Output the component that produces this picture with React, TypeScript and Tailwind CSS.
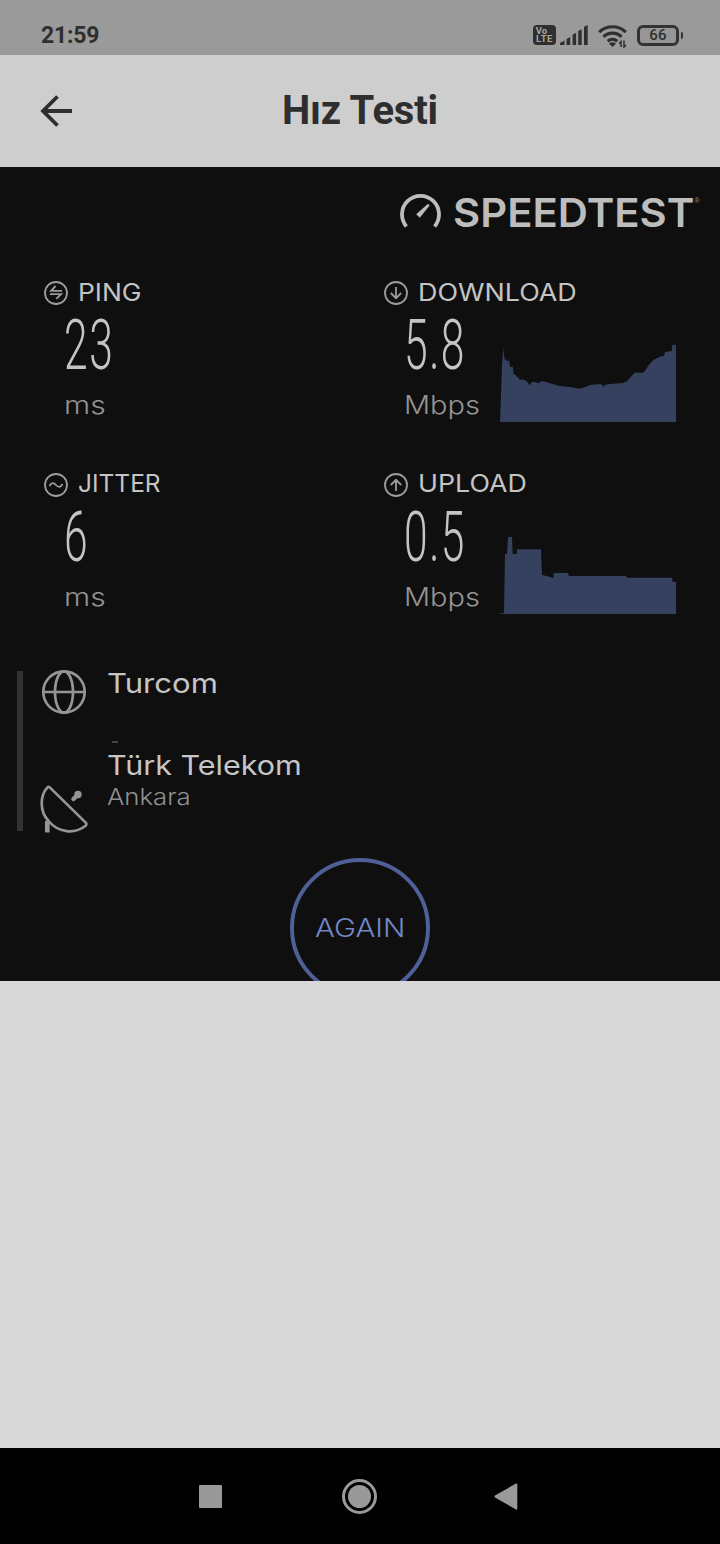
import type { ReactNode } from "react";

const DOWNLOAD =
  "0,77 2,21.7 3.3,2.3 4,10 5,15.7 6.7,14.3 7.7,16.7 9.3,15 10,22.3 12.7,21.3 13.7,29.3 15.7,30 17,32.3 18.3,32.3 20,35 22.7,34.3 26.7,36.3 29.7,40.3 31.7,37 35,37 36.7,37.7 40,37.7 41.3,36 46.7,37.3 58.3,40.7 71.7,42.3 79,43.7 83.3,42.7 90,40 96.7,39.3 101.7,39.3 103.3,42 104.7,40 110,39 123.3,38 127.3,36 130,32.7 134.7,27.7 141.7,27.7 144.3,26.7 148.3,20.7 153.3,15 161,11.3 164,11 165,7 171.7,6 172.3,0 176,0 176,77";
const UPLOAD =
  "0,77 0,76.3 4,76.3 5,17.3 7,16.7 8,0 12,0 12.7,17 16.7,17 17,12.3 41,12.3 42,38 46.7,39 53.3,41 53.7,36 67.7,36 69,39 126,39 127,40.7 172,40.7 172.7,45 176,45 176,77";

function Chart({ points }: { points: string }) {
  return (
    <svg width="176" height="77" viewBox="0 0 176 77" className="block">
      <polygon points={points} fill="#36405f" />
    </svg>
  );
}

function CircleIcon({ children }: { children: ReactNode }) {
  return (
    <svg width="24" height="24" viewBox="0 0 24 24" fill="none" stroke="#9c9c9c" strokeWidth="1.8" className="block shrink-0">
      <circle cx="12" cy="12" r="11" />
      {children}
    </svg>
  );
}

interface MetricProps {
  icon: ReactNode;
  label: string;
  labelClass: string;
  value: string;
  unit: string;
  unitClass: string;
  points?: string;
}

function Metric({ icon, label, labelClass, value, unit, unitClass, points }: MetricProps) {
  return (
    <section className="h-[144px] w-[340px]">
      <div className="flex h-6 items-center">
        <CircleIcon>{icon}</CircleIcon>
        <h2 className={`ml-[10px] origin-left whitespace-nowrap text-[24px] leading-6 text-[#c4c4c4] ${labelClass}`}>{label}</h2>
      </div>
      <div className="flex">
        <div className="ml-5 w-24">
          <p className="w-max origin-left scale-x-[0.6] whitespace-nowrap font-[Roboto] text-[71px] font-light leading-[80px] tracking-[2.5px] text-[#c4c4c4]">{value}</p>
          <p className={`w-max origin-left text-[25px] font-light leading-10 text-[#949494] ${unitClass}`}>{unit}</p>
        </div>
        {points && (
          <div className="pt-10">
            <Chart points={points} />
          </div>
        )}
      </div>
    </section>
  );
}

function StatusBar() {
  return (
    <div className="flex h-[55px] items-center bg-[#9a9a9a] pl-[41px] pr-[37px] pt-[15px] text-[#2f2f2f]">
      <span className="pt-[2px] font-[Roboto] text-[23px] font-bold leading-10 tracking-[-0.2px]">21:59</span>
      <div className="ml-auto flex items-center">
        <div className="flex h-[20px] w-[23px] flex-col items-center justify-center rounded-[4px] bg-[#2f2f2f] font-[Roboto] text-[9.5px] font-bold leading-[8.5px] text-[#a6a6a6]">
          <span className="-ml-1.5">Vo</span>
          <span className="tracking-[0.5px]">LTE</span>
        </div>
        <svg width="28" height="20" viewBox="0 0 28 20" className="ml-1 block" fill="currentColor">
          <path d="M0 20v-2l4.5-2.5v4.5zM6.5 20v-6l3.7-2v8zM12.6 20V9.5l3.500-1.500V20zM18.200 20V6l3.500-1.800V20zM24 20V1.800L27.700 0V20z" />
        </svg>
        <svg width="30" height="24" viewBox="0 0 30 24" className="ml-[10px] mt-0.5 block" fill="none" stroke="currentColor" strokeWidth="3.2">
          <path d="M1.2 8.2a19 19 0 0 1 26.6 0M5.5 12.8a13 13 0 0 1 18 0M9.8 17.2a7 7 0 0 1 9.4 0" />
          <path d="M11 19.8a5 5 0 0 1 7 0l-3.5 3.3z" fill="currentColor" stroke="none" />
          <path d="M23 23v-5.500l-2 2M26 16.500V23l2-2" strokeWidth="1.500" />
        </svg>
        <div className="ml-[9px] flex h-[21px] w-[42px] items-center justify-center rounded-[6px] border-[3px] border-[#333333] bg-[#969696] font-[Roboto] text-[15px] font-medium leading-4 tracking-[0.3px]">
          66
        </div>
        <div className="ml-[1.5px] h-[7px] w-[2.5px] rounded-r-sm bg-[#2f2f2f]" />
      </div>
    </div>
  );
}

export default function App() {
  return (
    <div className="flex h-[1544px] w-[720px] flex-col overflow-hidden bg-[#d8d8d8] font-[Inter,sans-serif]">
      <StatusBar />
      <header className="flex h-[112px] items-center bg-[#cecece] pl-10">
        <svg width="33" height="32" viewBox="0 0 33 32" fill="none" stroke="#2e2e2e" strokeWidth="3.8" className="block">
          <path d="M17.5 1.5L3 16l14.5 14.5M3 16h29" />
        </svg>
        <h1 className="ml-[209px] whitespace-nowrap font-[Roboto] text-[40px] font-bold leading-10 tracking-[-0.2px] text-[#2e2e2e]">Hız Testi</h1>
      </header>

      <main className="h-[814px] overflow-hidden bg-[#0f0f0f]">
        <div className="flex h-[114px] items-start pl-[400px] pt-[26px]">
          <svg width="41" height="38" viewBox="0 0 41 38" fill="none" stroke="#bdbdbd" className="block shrink-0">
            <path d="M6.4 33.4A18.5 18.5 0 1 1 34.6 33.4" strokeWidth="3.8" />
            <path d="M28 10.8l1.6 1.7-9.8 12.2-3.6-3.4z" fill="#bdbdbd" stroke="none" />
          </svg>
          <div className="ml-[12px] w-[241px]">
            <span className="block w-max origin-left scale-x-[1.045] whitespace-nowrap text-[40px] font-semibold leading-[40px] text-[#bdbdbd]">SPEEDTEST</span>
          </div>
          <span className="mt-[4px] font-['Liberation_Sans'] text-[8px] leading-[8px] text-[#858585]">®</span>
        </div>

        <div className="grid grid-cols-[340px_336px] gap-y-12 pl-11">
          <Metric
            icon={<path d="M11.5 5L7.2 9.9H18M6 13.100H17L12.300 17.800" strokeWidth="1.900" />}
            label="PING" labelClass="scale-x-[1.1]" value="23" unit="ms" unitClass="scale-x-[1.2]"
          />
          <Metric
            icon={<path d="M12 6v11M6.8 12L12 17.2 17.2 12" />}
            label="DOWNLOAD" labelClass="scale-x-[1.12]" value="5.8" unit="Mbps" unitClass="scale-x-[1.16]" points={DOWNLOAD}
          />
          <Metric
            icon={<path d="M5.5 13c1.8-3.6 4.2-3.6 6.5-1s4.7 2.6 6.5-1" />}
            label="JITTER" labelClass="-mt-[3px] scale-x-[1.02]" value="6" unit="ms" unitClass="scale-x-[1.2]"
          />
          <Metric
            icon={<path d="M12 18V7M6.8 12L12 6.8 17.2 12" />}
            label="UPLOAD" labelClass="-mt-[3px] scale-x-[1.115]" value="0.5" unit="Mbps" unitClass="scale-x-[1.16]" points={UPLOAD}
          />
        </div>

        <div className="mt-[54px] flex h-[160px] pl-[17px]">
          <div className="w-[6px] bg-[#333333]" />
          <div className="ml-[15px] flex w-[52px] flex-col">
            <svg width="46" height="46" viewBox="0 0 46 46" fill="none" stroke="#959595" strokeWidth="2.7" className="-mt-[2px] ml-[3px] block shrink-0">
              <circle cx="23" cy="23" r="20.7" />
              <ellipse cx="23" cy="23" rx="9" ry="20.7" />
              <path d="M2 23h42" />
            </svg>
            <svg width="52" height="52" viewBox="0 0 52 52" fill="none" stroke="#959595" strokeWidth="2.7" strokeLinejoin="round" className="mt-[68px] block shrink-0">
              <path d="M9.2 4.6C1.800 13 1.500 28.500 10.500 38 20.500 50 36.500 51.500 48 42.500q1-1.300 0-2.600L12 4.600q-1.400-1.400-2.800 0z" />
              <path d="M9.300 38v11.500" strokeWidth="4.700" />
              <path d="M35.500 16L39 12.500" strokeWidth="4.500" strokeLinecap="round" />
              <circle cx="40" cy="11.500" r="3.700" fill="#959595" stroke="none" />
            </svg>
          </div>
          <div className="ml-[17px] flex flex-col items-start whitespace-nowrap">
            <p className="-mt-[3px] origin-left scale-x-[1.15] text-[27px] leading-8 text-[#c6c6c6]">Turcom</p>
            <div className="ml-[5px] mt-[41px] h-[2px] w-[6px] bg-[#424242]" />
            <p className="mt-[7px] origin-left scale-x-[1.13] text-[27px] leading-8 text-[#c6c6c6]">Türk Telekom</p>
            <p className="-mt-px origin-left scale-x-[1.12] text-[23px] font-light leading-8 text-[#8f8f8f]">Ankara</p>
          </div>
        </div>

        <div className="mt-[27px] flex justify-center">
          <button className="flex h-[140px] w-[140px] items-center justify-center rounded-full border-4 border-[#4f5f97] pt-[2px] text-[25px] font-light text-[#7088c6]">
            <span className="scale-x-[1.18] whitespace-nowrap">AGAIN</span>
          </button>
        </div>
      </main>

      <nav className="mt-auto flex h-[96px] items-center bg-black pl-[199px]">
        <div className="h-[23px] w-[23px] rounded-[1px] bg-[#999999]" />
        <div className="ml-[120px] flex h-[35px] w-[35px] items-center justify-center rounded-full border-[3px] border-[#999999]">
          <div className="h-[23px] w-[23px] shrink-0 rounded-full bg-[#999999]" />
        </div>
        <svg width="24" height="27" viewBox="0 0 24 27" fill="#999999" className="ml-[117px] block">
          <path d="M1 12.5Q0 13.5 1 14.5L22 26.5Q23.3 27 23.3 25.5V1.5Q23.3 0 22 .5z" />
        </svg>
      </nav>
    </div>
  );
}
